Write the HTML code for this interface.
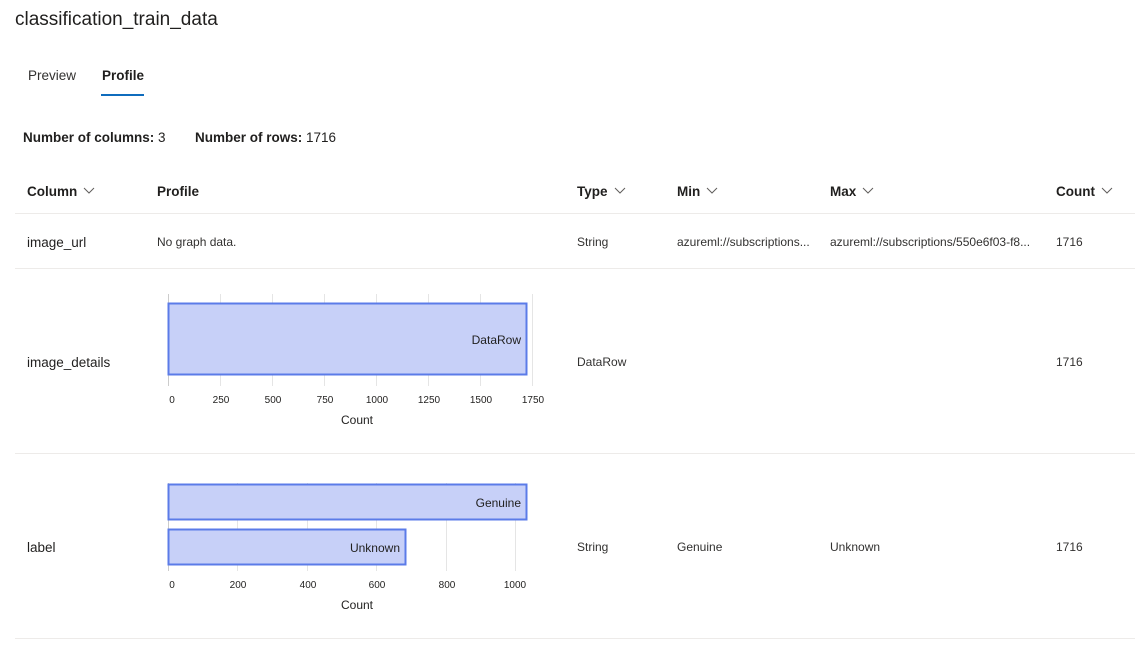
<!DOCTYPE html>
<html><head><meta charset="utf-8"><style>
*{margin:0;padding:0;box-sizing:border-box}
body{width:1135px;height:648px;background:#fff;font-family:"Liberation Sans",sans-serif;color:#201f1e;position:relative;overflow:hidden}
.a{position:absolute;white-space:nowrap}
.h{font-size:13.5px;font-weight:bold;top:184px}
.c{font-size:12px;color:#323130}
.line{position:absolute;left:15px;width:1120px;height:1px;background:#edebe9}
.chev{display:inline-block;vertical-align:middle;margin-left:6px;margin-top:-3px}
</style></head><body>
<div class="a" style="left:15px;top:9px;font-size:19px">classification_train_data</div>
<div class="a" style="left:28px;top:68px;font-size:13.5px;color:#323130">Preview</div>
<div class="a" style="left:102px;top:68px;font-size:13.5px;font-weight:bold">Profile</div>
<div class="a" style="left:101px;top:94px;width:43px;height:2px;background:#0f6cbd"></div>
<div class="a" style="left:23px;top:130px;font-size:13.5px"><b>Number of columns:</b> 3</div>
<div class="a" style="left:195px;top:130px;font-size:13.5px"><b>Number of rows:</b> 1716</div>

<div class="a h" style="left:27px">Column<svg class="chev" width="12" height="8"><path d="M1 1l5 5 5-5" fill="none" stroke="#605e5c"/></svg></div>
<div class="a h" style="left:157px">Profile</div>
<div class="a h" style="left:577px">Type<svg class="chev" width="12" height="8"><path d="M1 1l5 5 5-5" fill="none" stroke="#605e5c"/></svg></div>
<div class="a h" style="left:677px">Min<svg class="chev" width="12" height="8"><path d="M1 1l5 5 5-5" fill="none" stroke="#605e5c"/></svg></div>
<div class="a h" style="left:830px">Max<svg class="chev" width="12" height="8"><path d="M1 1l5 5 5-5" fill="none" stroke="#605e5c"/></svg></div>
<div class="a h" style="left:1056px">Count<svg class="chev" width="12" height="8"><path d="M1 1l5 5 5-5" fill="none" stroke="#605e5c"/></svg></div>
<div class="line" style="top:213px"></div>

<div class="a" style="left:27px;top:235px;font-size:13.5px">image_url</div>
<div class="a c" style="left:157px;top:235px">No graph data.</div>
<div class="a c" style="left:577px;top:235px">String</div>
<div class="a c" style="left:677px;top:235px">azureml://subscriptions...</div>
<div class="a c" style="left:830px;top:235px">azureml://subscriptions/550e6f03-f8...</div>
<div class="a c" style="left:1056px;top:235px">1716</div>
<div class="line" style="top:268px"></div>

<div class="a" style="left:27px;top:355px;font-size:13.5px">image_details</div>
<div class="a c" style="left:577px;top:355px">DataRow</div>
<div class="a c" style="left:1056px;top:355px">1716</div>
<svg class="a" style="left:150px;top:285px" width="420" height="150" font-family="Liberation Sans" font-size="10" fill="#201f1e">
<g stroke="#e5e5e5"><path d="M70.5 9v92M122.5 9v92M174.5 9v92M226.5 9v92M278.5 9v92M330.5 9v92M382.5 9v92"/></g>
<path d="M18.5 9v92" stroke="#ccc"/>
<rect x="18.5" y="18.5" width="358" height="71" fill="#c7d0f8" stroke="#5b7be8" stroke-width="2"/>
<text x="371" y="59" text-anchor="end" font-size="12">DataRow</text>
<g text-anchor="middle"><text x="22" y="118">0</text><text x="71" y="118">250</text><text x="123" y="118">500</text><text x="175" y="118">750</text><text x="227" y="118">1000</text><text x="279" y="118">1250</text><text x="331" y="118">1500</text><text x="383" y="118">1750</text>
<text x="207" y="139" font-size="12">Count</text></g>
</svg>
<div class="line" style="top:453px"></div>

<div class="a" style="left:27px;top:540px;font-size:13.5px">label</div>
<div class="a c" style="left:577px;top:540px">String</div>
<div class="a c" style="left:677px;top:540px">Genuine</div>
<div class="a c" style="left:830px;top:540px">Unknown</div>
<div class="a c" style="left:1056px;top:540px">1716</div>
<svg class="a" style="left:150px;top:475px" width="420" height="150" font-family="Liberation Sans" font-size="10" fill="#201f1e">
<g stroke="#e5e5e5"><path d="M87.5 8v88M157.5 8v88M226.5 8v88M296.5 8v88M365.5 8v88"/></g>
<path d="M18.5 8v88" stroke="#ccc"/>
<rect x="18.5" y="9.5" width="358" height="35" fill="#c7d0f8" stroke="#5b7be8" stroke-width="2"/>
<rect x="18.5" y="54.5" width="237" height="35" fill="#c7d0f8" stroke="#5b7be8" stroke-width="2"/>
<text x="371" y="32" text-anchor="end" font-size="12">Genuine</text>
<text x="250" y="77" text-anchor="end" font-size="12">Unknown</text>
<g text-anchor="middle"><text x="22" y="113">0</text><text x="88" y="113">200</text><text x="158" y="113">400</text><text x="227" y="113">600</text><text x="297" y="113">800</text><text x="365" y="113">1000</text>
<text x="207" y="134" font-size="12">Count</text></g>
</svg>
<div class="line" style="top:638px"></div>
</body></html>
